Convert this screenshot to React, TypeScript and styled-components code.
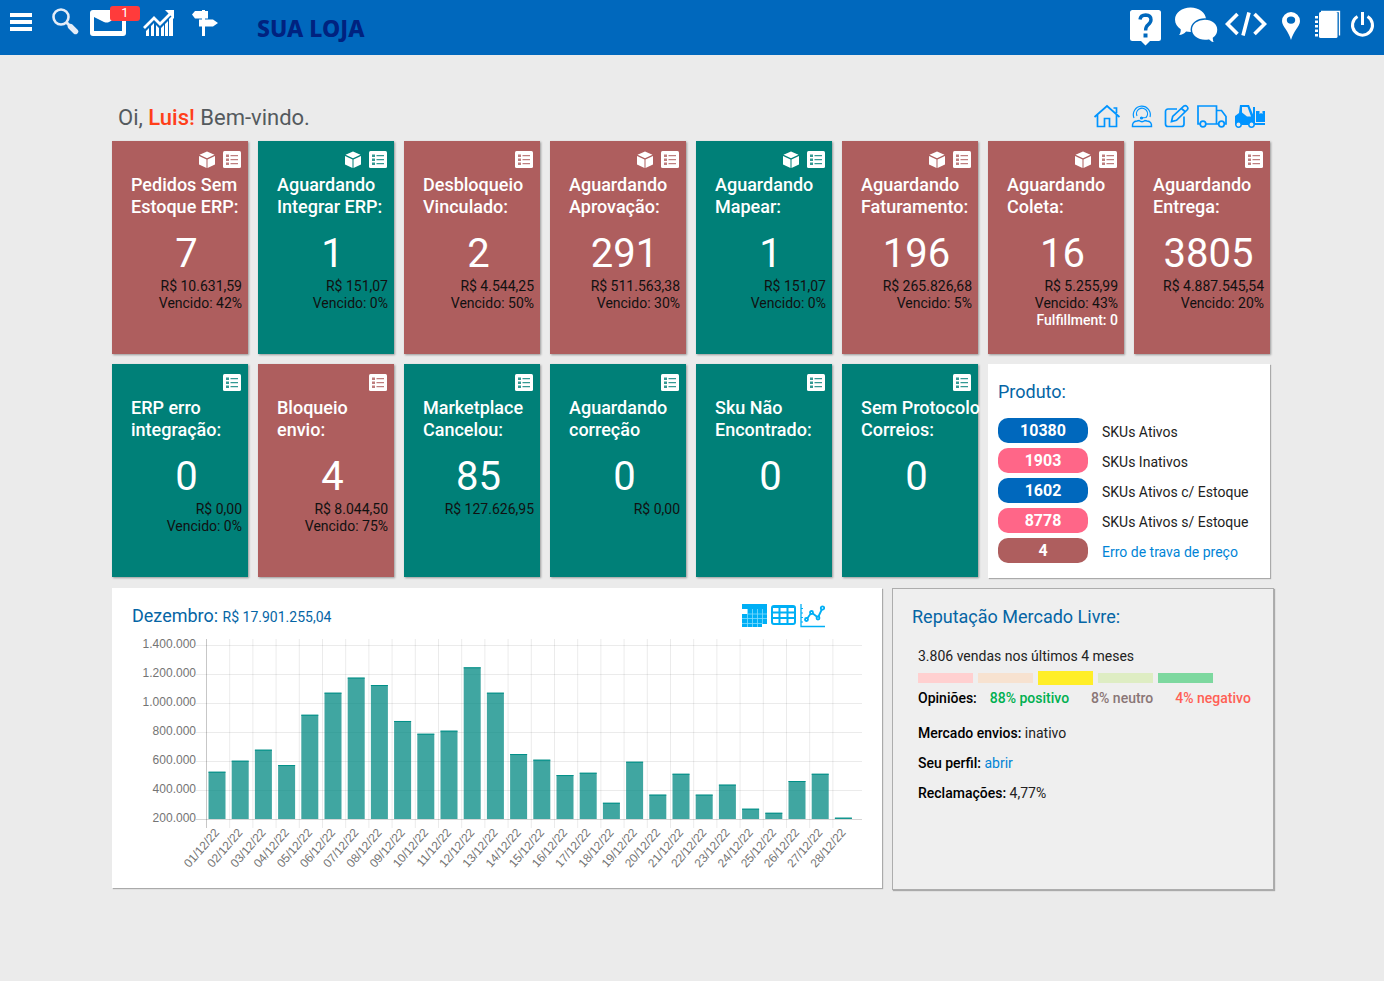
import React from "react";
import styled, { createGlobalStyle } from "styled-components";

const GlobalStyle = createGlobalStyle`
  * { box-sizing: border-box; }
  body {
    margin: 0;
    background: #ebebeb;
    font-family: Roboto, "Liberation Sans", sans-serif;
    font-size: 14px;
    line-height: 17px;
    color: #222;
  }
  h1, h2, p, ul { margin: 0; padding: 0; font-weight: 400; }
  ul { list-style: none; }
  a { color: #0084d6; text-decoration: none; }
  svg { display: block; }
`;

const TopBar = styled.header`
  display: flex;
  justify-content: space-between;
  height: 55px;
  padding: 0 8px 0 10px;
  background: #0068bd;
  color: #fff;
`;

const BarGroup = styled.nav<{ $gap: number }>`
  display: flex;
  align-items: flex-start;
  gap: ${(p) => p.$gap}px;
`;

const IconButton = styled.button`
  position: relative;
  padding: 0;
  border: 0;
  background: none;
  color: inherit;
  cursor: pointer;
`;

const MailCount = styled.span`
  position: absolute;
  top: 6px;
  left: 20px;
  width: 30px;
  height: 15px;
  border-radius: 3px;
  background: #ff3b3b;
  font: 400 13px/14px Roboto, sans-serif;
  text-align: center;
`;

const Brand = styled.a`
  margin-left: 28px;
  font: 800 23px/56px "Noto Sans", sans-serif;
  color: #00227f;
`;

const Main = styled.main`
  max-width: 1384px;
  margin: 0 auto;
  padding: 44px 110px 40px 112px;
`;

const Greeting = styled.div`
  display: flex;
  justify-content: space-between;
  align-items: center;
  height: 42px;
  padding: 0 8px 8px 6px;
`;

const Hello = styled.h1`
  padding-top: 4px;
  font-size: 22px;
  line-height: 26px;
  color: #545a5e;
`;

const UserName = styled.strong`
  font-weight: 500;
  color: #ff3f1a;
`;

const Shortcuts = styled.nav`
  display: flex;
  gap: 7px;
  color: #0094ff;
`;

const Tiles = styled.section`
  display: grid;
  grid-template-columns: repeat(8, minmax(0, 1fr));
  gap: 10px;
  margin-right: 4px;
  @media (max-width: 1100px) {
    grid-template-columns: repeat(4, minmax(0, 1fr));
  }
`;

const TileBox = styled.article<{ $late: boolean }>`
  height: 213px;
  padding: 10px 6px 0 19px;
  background: ${(p) => (p.$late ? "#ae5e5e" : "#008078")};
  box-shadow: 1px 1px 2px #999;
  color: #fff;
`;

const TileTools = styled.div`
  display: flex;
  justify-content: flex-end;
  align-items: flex-start;
  gap: 7px;
  height: 23px;
  padding-right: 1px;
`;

const TileTitle = styled.h2`
  font-size: 18px;
  font-weight: 500;
  line-height: 22px;
  white-space: pre;
`;

const TileCount = styled.p`
  padding-top: 12px;
  font-size: 40px;
  line-height: 48px;
  text-align: center;
`;

const TileNote = styled.p`
  color: #111;
  text-align: right;
  white-space: nowrap;
`;

const TileStrong = styled(TileNote)`
  font-weight: 500;
  color: #fff;
`;

const ProductPanel = styled.section`
  grid-column: span 2;
  height: 214px;
  padding: 16px 10px 0;
  background: #fff;
  box-shadow: 1px 1px 1px #aaa;
`;

const PanelTitle = styled.h2`
  font-size: 18px;
  line-height: 24px;
  color: #0565a5;
`;

const ProductList = styled.ul`
  display: grid;
  gap: 5px;
  margin-top: 14px;
`;

const ProductRow = styled.li`
  display: flex;
  gap: 14px;
  height: 25px;
  line-height: 28px;
`;

const Pill = styled.span<{ $color: string }>`
  width: 90px;
  border-radius: 10px;
  background: ${(p) => p.$color};
  font-size: 16px;
  font-weight: 700;
  line-height: 26px;
  text-align: center;
  color: #fff;
`;

const Lower = styled.div`
  display: grid;
  grid-template-columns: minmax(0, 770fr) minmax(0, 382fr);
  align-items: start;
  gap: 10px;
  margin-top: 10px;
  @media (max-width: 1100px) {
    grid-template-columns: minmax(0, 1fr);
  }
`;

const ChartPanel = styled.section`
  min-height: 300px;
  padding: 16px 20px 0;
  background: #fff;
  box-shadow: 1px 1px 1px #aaa;
`;

const ChartHead = styled.div`
  display: flex;
  justify-content: space-between;
  height: 32px;
  padding-right: 37px;
`;

const MonthTotal = styled.small`
  font-size: 14px;
`;

const ChartTools = styled.div`
  display: flex;
  gap: 4px;
  height: 24px;
  color: #00aff5;
`;

const ChartSvg = styled.svg`
  width: 100%;
  height: auto;
  font: 12px "Liberation Sans", sans-serif;
  fill: #747474;
`;

const Reputation = styled.section`
  min-height: 302px;
  padding: 16px 19px;
  border: 1px solid #adadad;
  background: #efefef;
  box-shadow: 1px 1px 1px #aaa;
`;

const RepBody = styled.div`
  padding: 19px 0 0 6px;
`;

const Thermometer = styled.div`
  display: flex;
  align-items: center;
  gap: 5px;
  height: 14px;
  margin: 6px 0 5px;
`;

const Level = styled.span<{ $color: string; $active?: boolean }>`
  width: 55px;
  height: ${(p) => (p.$active ? 14 : 10)}px;
  background: ${(p) => p.$color};
`;

const Opinions = styled.p`
  display: flex;
  gap: 22px;
  margin-bottom: 18px;
`;

const Opinion = styled.strong<{ $color: string }>`
  font-weight: 500;
  color: ${(p) => p.$color};
`;

const Fact = styled.p`
  margin-bottom: 13px;
`;

const FactName = styled.strong`
  font-weight: 500;
  color: #000;
`;

const OpinionName = styled(FactName)`
  margin-right: -9px;
`;

const MenuIcon = () => (
  <svg width="31" height="48" viewBox="0 0 31 48" fill="currentColor">
    <path d="M0 13h22v4H0zM0 20h22v4H0zM0 27h22v4H0z" />
  </svg>
);

const SearchIcon = () => (
  <svg width="27" height="48" viewBox="0 0 27 48" fill="none" stroke="#e4edf8">
    <circle cx="9" cy="17" r="7.5" strokeWidth="2.6" />
    <path d="M14.5 22.5l3 3" strokeWidth="3" />
    <path d="M18.500 26.500l5 5" strokeWidth="5.4" strokeLinecap="round" />
  </svg>
);

const MailIcon = () => (
  <svg width="42" height="48" viewBox="0 0 42 48">
    <rect x="0" y="10" width="36" height="26" rx="3" fill="#fff" />
    <path d="M4 17l10 5q3 1 5 0l13-7v16H4z" fill="#0068bd" />
  </svg>
);

const GrowthIcon = () => (
  <svg width="38" height="48" viewBox="0 0 38 48" fill="#fff">
    <path d="M3 31l3-3v8H3zM8 26l3-3v13H8zM13 25l3 3v8h-3zM18 28l3-3v11h-3zM22 24l3-3v15h-3zM26 19l4-4v21h-4z" />
    <path d="M1 28l10-10 6 6 11-11" fill="none" stroke="#fff" strokeWidth="2.8" />
    <path d="M22 10h9v9z" />
  </svg>
);

const SignpostIcon = () => (
  <svg width="26" height="48" viewBox="0 0 26 48" fill="#fff">
    <path d="M10 10h3v26h-3z" />
    <path d="M0 14.500l3-3.500h13v7.500H3zM7 19.500h14l5 3.500-5 3.500H7z" />
  </svg>
);

const HelpIcon = () => (
  <svg width="38" height="48" viewBox="0 0 38 48">
    <path d="M2.500 10h26a2.500 2.500 0 0 1 2.500 2.500v26a2.500 2.500 0 0 1-2.500 2.500H20l-4.500 4.500L11 41H2.500A2.500 2.500 0 0 1 0 38.500v-26A2.500 2.500 0 0 1 2.500 10z" fill="#fff" />
    <path d="M10 19.500q.5-4.500 5.700-4.500 5.300.2 5.300 4.800 0 2.700-3 5-2.400 1.800-2.400 5.700" fill="none" stroke="#0068bd" strokeWidth="3.400" />
    <path d="M13.500 33.500h4v4h-4z" fill="#0068bd" />
  </svg>
);

const ChatIcon = () => (
  <svg width="45" height="48" viewBox="0 0 45 48" fill="#fff">
    <path d="M16.500 7.500c8.500 0 15.500 5.200 15.500 12s-6 12.500-15.500 12.500c-1.600 0-3-.2-4.400-.5-1.900 2-4.300 3.400-7 3.500 1.300-1.600 1.800-3.800 1.600-5.800C3.200 27 1 23.500 1 19.500c0-6.800 7-12 15.500-12z" />
    <path d="M31 19c7.600 0 13 4.700 13 10.700 0 3.700-1.700 6.500-4.500 8.500-.1 1.800.4 3.300 1.700 4.800-2.700 0-4.900-1.100-6.400-2.800-1.200.3-2.500.4-3.800.4-7.600 0-13.700-4.900-13.700-11S23.400 19 31 19z" stroke="#0068bd" strokeWidth="1.500" />
  </svg>
);

const CodeIcon = () => (
  <svg width="42" height="48" viewBox="0 0 42 48" fill="none" stroke="#fff" strokeWidth="3.600">
    <path d="M12.500 14L2.500 24l10 10M29.500 14l10 10-10 10M24 12.500L18 35.500" />
  </svg>
);

const PinIcon = () => (
  <svg width="36" height="48" viewBox="0 0 36 48">
    <path fillRule="evenodd" fill="#fff" d="M18 12a9 9 0 0 1 9 9c0 3-1.700 5.200-3.600 8-2.200 3.200-4.200 7-5.400 11-1.200-4-3.200-7.800-5.400-11C10.700 26.200 9 24 9 21a9 9 0 0 1 9-9zm0 4.500a4.200 3.600 0 1 0 0 7.200 4.200 3.600 0 1 0 0-7.200z" />
  </svg>
);

const NotebookIcon = () => (
  <svg width="29" height="48" viewBox="0 0 29 48" fill="#fff">
    <rect x="4" y="12" width="18.500" height="26" rx="1.500" />
    <path d="M6 11.500h18.500v24" fill="none" stroke="#fff" strokeWidth="1.300" />
    <path d="M0 16h3v2.500H0zM0 20.500h3V23H0zM0 25h3v2.500H0zM0 29.500h3V32H0zM0 34h3v2.500H0z" />
  </svg>
);

const PowerIcon = () => (
  <svg width="26" height="48" viewBox="0 0 26 48" fill="none" stroke="#fff" strokeWidth="3">
    <path d="M7.500 16.500a10 10 0 1 0 10 0M12.500 12v13" />
  </svg>
);

const HomeIcon = () => (
  <svg width="30" height="24" viewBox="0 0 30 24" fill="none" stroke="currentColor" strokeWidth="1.700">
    <path d="M1.500 13L14 2l12.500 11M4.500 11v11.500h7v-8h5v8h7V11M20.500 4h3v5" />
  </svg>
);

const AgentIcon = () => (
  <svg width="27" height="24" viewBox="0 0 27 24" fill="none" stroke="currentColor" strokeWidth="1.200">
    <path d="M4 14A8.500 8.500 0 1 1 20 13M7 12a5.500 5.500 0 1 1 9 1.500l-5 .5" />
    <path d="M2.500 22.500q-.5-5 4.500-5.500l2-.5q3 2.500 6 0l2 .5q5 .5 4.500 5.500z" strokeWidth="1.500" />
    <circle cx="11.500" cy="14" r="1" fill="currentColor" />
  </svg>
);

const EditIcon = () => (
  <svg width="26" height="24" viewBox="0 0 26 24" fill="none" stroke="currentColor" strokeWidth="1.700">
    <path d="M13 5H4a2.500 2.500 0 0 0-2.500 2.500V20A2.500 2.500 0 0 0 4 22.500h13.500A2.500 2.500 0 0 0 20 20v-7.500" />
    <path d="M7.500 17.500l1.200-5L20 2q1.500-1 3 .5t.5 3L12.500 16.300zM17.500 4.500l4 3.500" />
  </svg>
);

const TruckIcon = () => (
  <svg width="30" height="24" viewBox="0 0 30 24" fill="none" stroke="currentColor" strokeWidth="1.700">
    <path d="M3 20H1V2h18.500v18H9M19.500 6.500h5L29 12.500V20h-1.500M21.500 20h-2" />
    <circle cx="6" cy="20" r="2.800" />
    <circle cx="24.500" cy="20" r="2.800" />
  </svg>
);

const ForkliftIcon = () => (
  <svg width="32" height="24" viewBox="0 0 32 24" fill="currentColor">
    <path fillRule="evenodd" d="M6 1h9l5.500 13v7H1v-9l4-3zm2 2v5.500l5 4h4L13.500 3z" />
    <path d="M19 3h2v17h-2zM20 19h11v2H20zM22 7h3.500v3l1.500-1 1.500 1V7H31v11h-9z" />
    <g fill="#ebebeb" stroke="currentColor" strokeWidth="1.500">
      <circle cx="4.500" cy="20.500" r="2.700" />
      <circle cx="17.500" cy="20.500" r="2.700" />
    </g>
  </svg>
);

const BoxIcon = () => (
  <svg width="18" height="18" viewBox="0 0 18 18" fill="currentColor">
    <path d="M9 .5l7.500 3.300L9 7.300 1.500 3.800zM1 5l7.500 3.500V17L1 13.500zM17 5v8.500L9.500 17V8.500z" />
  </svg>
);

const ListIcon = ({ hole }: { hole: string }) => (
  <svg width="18" height="18" viewBox="0 0 18 18">
    <rect width="18" height="17" rx="1.500" fill="currentColor" />
    <path d="M3 3.500h3V6H3zM3 7.500h3V10H3zM3 11.500h3V14H3zM7.500 4H15v1.200H7.500zM7.500 8H15v1.200H7.500zM7.500 12H15v1.200H7.500z" fill={hole} fillOpacity=".8" />
  </svg>
);

const CalendarIcon = () => (
  <svg width="25" height="24" viewBox="0 0 25 24">
    <path d="M0 0h25v20h-5v3H0V10h5.500V5H0z" fill="currentColor" />
    <path d="M0 5v5h5.500V5z" fill="#fff" />
    <path d="M0 14.500h25M0 19.500h20M5.500 10H25M5.500 5v18M10.500 5v18M15.500 5v18M20.500 5v15" stroke="#7fdcff" strokeWidth=".8" />
  </svg>
);

const TableIcon = () => (
  <svg width="25" height="24" viewBox="0 0 25 24" fill="none" stroke="currentColor" strokeWidth="2">
    <rect x="1" y="2" width="23" height="18" rx="2" />
    <path d="M1 3h23M1 8.500h23M1 14h23M8.500 3v17M16.500 3v17" />
  </svg>
);

const TrendIcon = () => (
  <svg width="25" height="24" viewBox="0 0 25 24" fill="none" stroke="currentColor">
    <path d="M1 0v22.500h24" strokeWidth="1.300" />
    <path d="M1 4.500h2M1 9h2M1 13.500h2M1 18h2" />
    <path d="M6.500 15.500l5-7 6.500 5L22.500 4" strokeWidth="1.800" />
    <g strokeWidth="1.800" fill="#fff">
      <circle cx="6.500" cy="15.500" r="1.500" />
      <circle cx="11.500" cy="8.500" r="1.500" />
      <circle cx="18" cy="14" r="1.500" />
      <circle cx="22.500" cy="4" r="1.700" />
    </g>
  </svg>
);

type Tile = {
  title: string;
  count: string;
  late?: boolean;
  box?: boolean;
  notes?: string[];
  extra?: string;
};

const tiles: Tile[] = [
  { title: "Pedidos Sem\nEstoque ERP:", count: "7", late: true, box: true, notes: ["R$ 10.631,59", "Vencido: 42%"] },
  { title: "Aguardando\nIntegrar ERP:", count: "1", box: true, notes: ["R$ 151,07", "Vencido: 0%"] },
  { title: "Desbloqueio\nVinculado:", count: "2", late: true, notes: ["R$ 4.544,25", "Vencido: 50%"] },
  { title: "Aguardando\nAprovação:", count: "291", late: true, box: true, notes: ["R$ 511.563,38", "Vencido: 30%"] },
  { title: "Aguardando\nMapear:", count: "1", box: true, notes: ["R$ 151,07", "Vencido: 0%"] },
  { title: "Aguardando\nFaturamento:", count: "196", late: true, box: true, notes: ["R$ 265.826,68", "Vencido: 5%"] },
  { title: "Aguardando\nColeta:", count: "16", late: true, box: true, notes: ["R$ 5.255,99", "Vencido: 43%"], extra: "Fulfillment: 0" },
  { title: "Aguardando\nEntrega:", count: "3805", late: true, notes: ["R$ 4.887.545,54", "Vencido: 20%"] },
  { title: "ERP erro\nintegração:", count: "0", notes: ["R$ 0,00", "Vencido: 0%"] },
  { title: "Bloqueio\nenvio:", count: "4", late: true, notes: ["R$ 8.044,50", "Vencido: 75%"] },
  { title: "Marketplace\nCancelou:", count: "85", notes: ["R$ 127.626,95"] },
  { title: "Aguardando\ncorreção", count: "0", notes: ["R$ 0,00"] },
  { title: "Sku Não\nEncontrado:", count: "0" },
  { title: "Sem Protocolo\nCorreios:", count: "0" },
];

const products = [
  { count: "10380", label: "SKUs Ativos", color: "#0068bd" },
  { count: "1903", label: "SKUs Inativos", color: "#ff6688" },
  { count: "1602", label: "SKUs Ativos c/ Estoque", color: "#0068bd" },
  { count: "8778", label: "SKUs Ativos s/ Estoque", color: "#ff6688" },
  { count: "4", label: "Erro de trava de preço", color: "#ae5e5e", link: true },
];

// Daily sales, in thousands of reais.
const sales = [
  526, 602, 678, 572, 919, 1071, 1175, 1124, 876, 788, 809, 1246, 1071, 648,
  609, 503, 519, 312, 595, 368, 512, 368, 437, 271, 243, 462, 512, 209,
];

const axis = ["1.400.000", "1.200.000", "1.000.000", "800.000", "600.000", "400.000", "200.000"];

const levels = ["#ffd0d0", "#f7e2d0", "#ffee28", "#deedc3", "#7dd89f"];

function SalesChart() {
  const left = 74;
  const base = 183;
  const step = 23.2;
  return (
    <ChartSvg viewBox="0 0 730 240" role="img" aria-label="Vendas por dia em dezembro">
      {axis.map((label, i) => (
        <g key={label}>
          <path d={`M64 ${9.5 + i * 29}H730`} stroke="#000" strokeOpacity={i === 6 ? 0.16 : 0.08} />
          <text x="64" y={12 + i * 29} textAnchor="end">{label}</text>
        </g>
      ))}
      {sales.map((value, i) => {
        const x = left + i * step;
        const h = ((value - 200) * 29) / 200;
        const day = String(i + 1).padStart(2, "0");
        return (
          <g key={day}>
            <path d={`M${x + 0.5} 3V192`} stroke="#000" strokeOpacity={i === 0 ? 0.22 : 0.08} />
            <rect x={x + 2.5} y={base - h} width="17" height={h} fill="#008882" fillOpacity=".75" />
            <rect x={x + 2.5} y={base - h} width="17" height="1" fill="#009088" />
            <text transform={`translate(${x + 14} 197) rotate(-49)`} textAnchor="end">
              {`${day}/12/22`}
            </text>
          </g>
        );
      })}
    </ChartSvg>
  );
}

export default function App() {
  return (
    <>
      <GlobalStyle />
      <TopBar>
        <BarGroup $gap={11}>
          <IconButton aria-label="Menu"><MenuIcon /></IconButton>
          <IconButton aria-label="Buscar"><SearchIcon /></IconButton>
          <IconButton aria-label="Mensagens"><MailIcon /><MailCount>1</MailCount></IconButton>
          <IconButton aria-label="Relatórios"><GrowthIcon /></IconButton>
          <IconButton aria-label="Guia"><SignpostIcon /></IconButton>
          <Brand href="#">SUA LOJA</Brand>
        </BarGroup>
        <BarGroup $gap={6}>
          <IconButton aria-label="Ajuda"><HelpIcon /></IconButton>
          <IconButton aria-label="Conversas"><ChatIcon /></IconButton>
          <IconButton aria-label="API"><CodeIcon /></IconButton>
          <IconButton aria-label="Rastreio"><PinIcon /></IconButton>
          <IconButton aria-label="Agenda"><NotebookIcon /></IconButton>
          <IconButton aria-label="Sair"><PowerIcon /></IconButton>
        </BarGroup>
      </TopBar>
      <Main>
        <Greeting>
          <Hello>Oi, <UserName>Luis!</UserName> Bem-vindo.</Hello>
          <Shortcuts>
            <IconButton aria-label="Início"><HomeIcon /></IconButton>
            <IconButton aria-label="Atendimento"><AgentIcon /></IconButton>
            <IconButton aria-label="Editar"><EditIcon /></IconButton>
            <IconButton aria-label="Entregas"><TruckIcon /></IconButton>
            <IconButton aria-label="Estoque"><ForkliftIcon /></IconButton>
          </Shortcuts>
        </Greeting>
        <Tiles>
          {tiles.map((t) => (
            <TileBox key={t.title} $late={!!t.late}>
              <TileTools>
                {t.box && <IconButton aria-label="Produtos"><BoxIcon /></IconButton>}
                <IconButton aria-label="Lista"><ListIcon hole={t.late ? "#ae5e5e" : "#008078"} /></IconButton>
              </TileTools>
              <TileTitle>{t.title}</TileTitle>
              <TileCount>{t.count}</TileCount>
              {t.notes?.map((n) => <TileNote key={n}>{n}</TileNote>)}
              {t.extra && <TileStrong>{t.extra}</TileStrong>}
            </TileBox>
          ))}
          <ProductPanel>
            <PanelTitle>Produto:</PanelTitle>
            <ProductList>
              {products.map((p) => (
                <ProductRow key={p.label}>
                  <Pill $color={p.color}>{p.count}</Pill>
                  {p.link ? <a href="#">{p.label}</a> : <span>{p.label}</span>}
                </ProductRow>
              ))}
            </ProductList>
          </ProductPanel>
        </Tiles>
        <Lower>
          <ChartPanel>
            <ChartHead>
              <PanelTitle>Dezembro: <MonthTotal>R$ 17.901.255,04</MonthTotal></PanelTitle>
              <ChartTools>
                <IconButton aria-label="Calendário"><CalendarIcon /></IconButton>
                <IconButton aria-label="Tabela"><TableIcon /></IconButton>
                <IconButton aria-label="Gráfico"><TrendIcon /></IconButton>
              </ChartTools>
            </ChartHead>
            <SalesChart />
          </ChartPanel>
          <Reputation>
            <PanelTitle>Reputação Mercado Livre:</PanelTitle>
            <RepBody>
              <p>3.806 vendas nos últimos 4 meses</p>
              <Thermometer>
                {levels.map((c, i) => <Level key={c} $color={c} $active={i === 2} />)}
              </Thermometer>
              <Opinions>
                <OpinionName>Opiniões:</OpinionName>
                <Opinion $color="#00b050">88% positivo</Opinion>
                <Opinion $color="#8a7676">8% neutro</Opinion>
                <Opinion $color="#ff5f55">4% negativo</Opinion>
              </Opinions>
              <Fact><FactName>Mercado envios:</FactName> inativo</Fact>
              <Fact><FactName>Seu perfil:</FactName> <a href="#">abrir</a></Fact>
              <Fact><FactName>Reclamações:</FactName> 4,77%</Fact>
            </RepBody>
          </Reputation>
        </Lower>
      </Main>
    </>
  );
}
